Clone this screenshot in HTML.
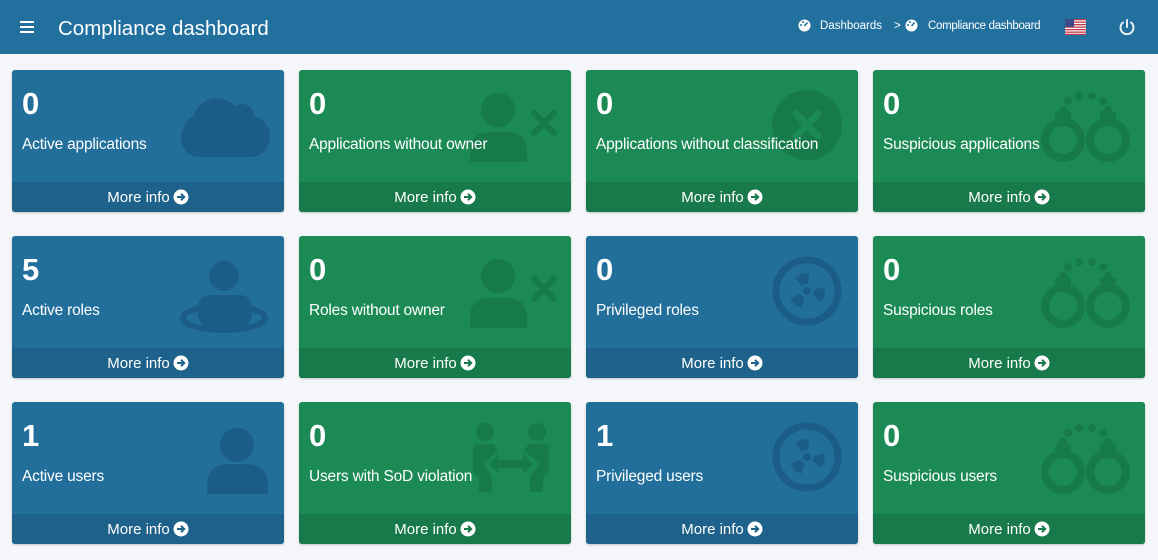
<!DOCTYPE html>
<html><head><meta charset="utf-8"><style>
*{margin:0;padding:0;box-sizing:border-box}
body{width:1158px;height:560px;background:#f4f6f9;font-family:"Liberation Sans",sans-serif;position:relative;overflow:hidden}
.hdr{position:absolute;left:0;top:0;width:1158px;height:54px;background:#21709e;color:#fff}
.title{position:absolute;left:58px;top:17px;font-size:20.5px}
.burger{position:absolute;left:20px;top:21px;width:14px}
.burger i{display:block;height:2px;background:#fff;margin-bottom:3px}
.bc{position:absolute;top:19px;font-size:11.5px;color:#fff}
.card{position:absolute;width:272px;height:142px;border-radius:3px;box-shadow:0 1px 2px rgba(0,0,0,.2);overflow:hidden;color:#fff}
.b{background:#226f9c}.g{background:#1b8a55}
.b .ft{background:#1e628b}.g .ft{background:#187a4b}
.num{position:absolute;left:10px;top:16px;font-size:31px;font-weight:bold}
.lbl{position:absolute;left:10px;top:66px;font-size:15.5px;white-space:nowrap;z-index:2;letter-spacing:-0.2px}
.ft{position:absolute;left:0;bottom:0;width:100%;height:30px;text-align:center;font-size:15px;line-height:32px;z-index:2}
.ft svg{vertical-align:-3px;margin-left:3px}
.ic{position:absolute;left:0;top:0}
</style></head><body>
<div class="hdr">
<div class="burger"><i></i><i></i><i></i></div>
<div class="title">Compliance dashboard</div>
<svg style="position:absolute;left:798px;top:19px" width="13" height="13" viewBox="0 0 13 13"><circle cx="6.5" cy="6.5" r="6" fill="#fff"/><path d="M6.5 7 L9.5 3.5" stroke="#21709e" stroke-width="1.6"/><circle cx="3" cy="6" r="1" fill="#21709e"/><circle cx="5" cy="3" r="1" fill="#21709e"/></svg>
<div class="bc" style="left:820px;top:20px">Dashboards</div>
<div class="bc" style="left:894px;top:20px">&gt;</div>
<svg style="position:absolute;left:905px;top:19px" width="13" height="13" viewBox="0 0 13 13"><circle cx="6.5" cy="6.5" r="6" fill="#fff"/><path d="M6.5 7 L9.5 3.5" stroke="#21709e" stroke-width="1.6"/><circle cx="3" cy="6" r="1" fill="#21709e"/><circle cx="5" cy="3" r="1" fill="#21709e"/></svg>
<div class="bc" style="left:928px;top:20px;letter-spacing:-0.3px">Compliance dashboard</div>
<svg style="position:absolute;left:1065px;top:19px" width="21" height="16" viewBox="0 0 21 16"><rect width="21" height="16" fill="#fff"/><g fill="#c0394b"><rect y="0" width="21" height="1.3"/><rect y="2.5" width="21" height="1.3"/><rect y="5" width="21" height="1.3"/><rect y="7.5" width="21" height="1.3"/><rect y="10" width="21" height="1.3"/><rect y="12.5" width="21" height="1.3"/><rect y="14.7" width="21" height="1.3"/></g><rect width="9" height="8" fill="#3c4a8a"/></svg>
<svg style="position:absolute;left:1118px;top:18px" width="18" height="18" viewBox="0 0 18 18"><path d="M5 4.5 A6.5 6.5 0 1 0 13 4.5" fill="none" stroke="#e8eef4" stroke-width="2" stroke-linecap="round"/><path d="M9 2 V9" stroke="#e8eef4" stroke-width="2" stroke-linecap="round"/></svg>
</div>

<!-- Row 1 -->
<div class="card b" style="left:12px;top:70px">
<svg class="ic" width="272" height="142"><g fill="#1c5d87"><rect x="169" y="50" width="88" height="37" rx="18"/><circle cx="205" cy="52" r="24"/><circle cx="230" cy="46" r="12"/><circle cx="190" cy="64" r="20"/><circle cx="238" cy="66" r="20"/></g></svg>
<div class="num">0</div><div class="lbl">Active applications</div>
<div class="ft">More info<svg width="16" height="16" viewBox="0 0 16 16"><circle cx="8" cy="8" r="7.5" fill="#fff"/><path d="M4 8h7M8 4.8 11.2 8 8 11.2" stroke="#1e628b" stroke-width="2" fill="none"/></svg></div></div>

<div class="card g" style="left:299px;top:70px">
<svg class="ic" width="272" height="142"><g fill="#177a49"><circle cx="199" cy="40" r="17"/><path d="M171 92 V82 Q171 62 191 62 H208 Q228 62 228 82 V92Z"/><path d="M235 43 L255 63 M255 43 L235 63" stroke="#177a49" stroke-width="6" stroke-linecap="round"/></g></svg>
<div class="num">0</div><div class="lbl">Applications without owner</div>
<div class="ft">More info<svg width="16" height="16" viewBox="0 0 16 16"><circle cx="8" cy="8" r="7.5" fill="#fff"/><path d="M4 8h7M8 4.8 11.2 8 8 11.2" stroke="#187a4b" stroke-width="2" fill="none"/></svg></div></div>

<div class="card g" style="left:586px;top:70px">
<svg class="ic" width="272" height="142"><circle cx="221" cy="55" r="35" fill="#177a49"/><path d="M210 44 L232 66 M232 44 L210 66" stroke="#1b8a55" stroke-width="7" stroke-linecap="round"/></svg>
<div class="num">0</div><div class="lbl">Applications without classification</div>
<div class="ft">More info<svg width="16" height="16" viewBox="0 0 16 16"><circle cx="8" cy="8" r="7.5" fill="#fff"/><path d="M4 8h7M8 4.8 11.2 8 8 11.2" stroke="#187a4b" stroke-width="2" fill="none"/></svg></div></div>

<div class="card g" style="left:873px;top:70px">
<svg class="ic" width="272" height="142"><g fill="none" stroke="#177a49" stroke-width="8"><circle cx="190" cy="70" r="18"/><circle cx="235" cy="70" r="18"/></g><g fill="#177a49"><rect x="182" y="41" width="16" height="10" rx="4"/><rect x="227" y="41" width="16" height="10" rx="4"/><circle cx="190" cy="40" r="4"/><circle cx="235" cy="40" r="4"/><circle cx="195" cy="31" r="4"/><circle cx="206" cy="26" r="4"/><circle cx="219" cy="26" r="4"/><circle cx="230" cy="31" r="4"/></g></svg>
<div class="num">0</div><div class="lbl">Suspicious applications</div>
<div class="ft">More info<svg width="16" height="16" viewBox="0 0 16 16"><circle cx="8" cy="8" r="7.5" fill="#fff"/><path d="M4 8h7M8 4.8 11.2 8 8 11.2" stroke="#187a4b" stroke-width="2" fill="none"/></svg></div></div>

<!-- Row 2 -->
<div class="card b" style="left:12px;top:236px">
<svg class="ic" width="272" height="142"><g fill="#1c5d87"><circle cx="212" cy="40" r="15"/><rect x="186" y="59" width="54" height="32" rx="12"/></g><ellipse cx="212" cy="82" rx="41" ry="12" fill="none" stroke="#1c5d87" stroke-width="6"/></svg>
<div class="num">5</div><div class="lbl">Active roles</div>
<div class="ft">More info<svg width="16" height="16" viewBox="0 0 16 16"><circle cx="8" cy="8" r="7.5" fill="#fff"/><path d="M4 8h7M8 4.8 11.2 8 8 11.2" stroke="#1e628b" stroke-width="2" fill="none"/></svg></div></div>

<div class="card g" style="left:299px;top:236px">
<svg class="ic" width="272" height="142"><g fill="#177a49"><circle cx="199" cy="40" r="17"/><path d="M171 92 V82 Q171 62 191 62 H208 Q228 62 228 82 V92Z"/><path d="M235 43 L255 63 M255 43 L235 63" stroke="#177a49" stroke-width="6" stroke-linecap="round"/></g></svg>
<div class="num">0</div><div class="lbl">Roles without owner</div>
<div class="ft">More info<svg width="16" height="16" viewBox="0 0 16 16"><circle cx="8" cy="8" r="7.5" fill="#fff"/><path d="M4 8h7M8 4.8 11.2 8 8 11.2" stroke="#187a4b" stroke-width="2" fill="none"/></svg></div></div>

<div class="card b" style="left:586px;top:236px">
<svg class="ic" width="272" height="142"><circle cx="221" cy="55" r="31" fill="none" stroke="#1c5d87" stroke-width="7"/><g fill="#1c5d87"><path d="M221 55 L207 44 A18 18 0 0 1 220 37Z" transform="rotate(10 221 55)"/><path d="M221 55 L207 44 A18 18 0 0 1 220 37Z" transform="rotate(130 221 55)"/><path d="M221 55 L207 44 A18 18 0 0 1 220 37Z" transform="rotate(250 221 55)"/></g><circle cx="221" cy="55" r="7" fill="#226f9c"/><circle cx="221" cy="55" r="4" fill="#1c5d87"/></svg>
<div class="num">0</div><div class="lbl">Privileged roles</div>
<div class="ft">More info<svg width="16" height="16" viewBox="0 0 16 16"><circle cx="8" cy="8" r="7.5" fill="#fff"/><path d="M4 8h7M8 4.8 11.2 8 8 11.2" stroke="#1e628b" stroke-width="2" fill="none"/></svg></div></div>

<div class="card g" style="left:873px;top:236px">
<svg class="ic" width="272" height="142"><g fill="none" stroke="#177a49" stroke-width="8"><circle cx="190" cy="70" r="18"/><circle cx="235" cy="70" r="18"/></g><g fill="#177a49"><rect x="182" y="41" width="16" height="10" rx="4"/><rect x="227" y="41" width="16" height="10" rx="4"/><circle cx="190" cy="40" r="4"/><circle cx="235" cy="40" r="4"/><circle cx="195" cy="31" r="4"/><circle cx="206" cy="26" r="4"/><circle cx="219" cy="26" r="4"/><circle cx="230" cy="31" r="4"/></g></svg>
<div class="num">0</div><div class="lbl">Suspicious roles</div>
<div class="ft">More info<svg width="16" height="16" viewBox="0 0 16 16"><circle cx="8" cy="8" r="7.5" fill="#fff"/><path d="M4 8h7M8 4.8 11.2 8 8 11.2" stroke="#187a4b" stroke-width="2" fill="none"/></svg></div></div>

<!-- Row 3 -->
<div class="card b" style="left:12px;top:402px">
<svg class="ic" width="272" height="142"><g fill="#1c5d87"><circle cx="225" cy="43" r="17"/><path d="M195 92 V84 Q195 62 217 62 H234 Q256 62 256 84 V92Z"/></g></svg>
<div class="num">1</div><div class="lbl">Active users</div>
<div class="ft">More info<svg width="16" height="16" viewBox="0 0 16 16"><circle cx="8" cy="8" r="7.5" fill="#fff"/><path d="M4 8h7M8 4.8 11.2 8 8 11.2" stroke="#1e628b" stroke-width="2" fill="none"/></svg></div></div>

<div class="card g" style="left:299px;top:402px">
<svg class="ic" width="272" height="142"><g fill="#177a49"><circle cx="186" cy="30" r="9"/><circle cx="238" cy="30" r="9"/><path d="M174 45 Q174 42 182 42 H194 L199 48 L184 62 L193 74 V90 H180 V76 L174 70Z"/><path d="M250 45 Q250 42 242 42 H230 L225 48 L240 62 L231 74 V90 H244 V76 L250 70Z"/><path d="M190 62 L200 52 V58 H224 V52 L234 62 L224 72 V66 H200 V72Z"/></g></svg>
<div class="num">0</div><div class="lbl">Users with SoD violation</div>
<div class="ft">More info<svg width="16" height="16" viewBox="0 0 16 16"><circle cx="8" cy="8" r="7.5" fill="#fff"/><path d="M4 8h7M8 4.8 11.2 8 8 11.2" stroke="#187a4b" stroke-width="2" fill="none"/></svg></div></div>

<div class="card b" style="left:586px;top:402px">
<svg class="ic" width="272" height="142"><circle cx="221" cy="55" r="31" fill="none" stroke="#1c5d87" stroke-width="7"/><g fill="#1c5d87"><path d="M221 55 L207 44 A18 18 0 0 1 220 37Z" transform="rotate(10 221 55)"/><path d="M221 55 L207 44 A18 18 0 0 1 220 37Z" transform="rotate(130 221 55)"/><path d="M221 55 L207 44 A18 18 0 0 1 220 37Z" transform="rotate(250 221 55)"/></g><circle cx="221" cy="55" r="7" fill="#226f9c"/><circle cx="221" cy="55" r="4" fill="#1c5d87"/></svg>
<div class="num">1</div><div class="lbl">Privileged users</div>
<div class="ft">More info<svg width="16" height="16" viewBox="0 0 16 16"><circle cx="8" cy="8" r="7.5" fill="#fff"/><path d="M4 8h7M8 4.8 11.2 8 8 11.2" stroke="#1e628b" stroke-width="2" fill="none"/></svg></div></div>

<div class="card g" style="left:873px;top:402px">
<svg class="ic" width="272" height="142"><g fill="none" stroke="#177a49" stroke-width="8"><circle cx="190" cy="70" r="18"/><circle cx="235" cy="70" r="18"/></g><g fill="#177a49"><rect x="182" y="41" width="16" height="10" rx="4"/><rect x="227" y="41" width="16" height="10" rx="4"/><circle cx="190" cy="40" r="4"/><circle cx="235" cy="40" r="4"/><circle cx="195" cy="31" r="4"/><circle cx="206" cy="26" r="4"/><circle cx="219" cy="26" r="4"/><circle cx="230" cy="31" r="4"/></g></svg>
<div class="num">0</div><div class="lbl">Suspicious users</div>
<div class="ft">More info<svg width="16" height="16" viewBox="0 0 16 16"><circle cx="8" cy="8" r="7.5" fill="#fff"/><path d="M4 8h7M8 4.8 11.2 8 8 11.2" stroke="#187a4b" stroke-width="2" fill="none"/></svg></div></div>
</body></html>
